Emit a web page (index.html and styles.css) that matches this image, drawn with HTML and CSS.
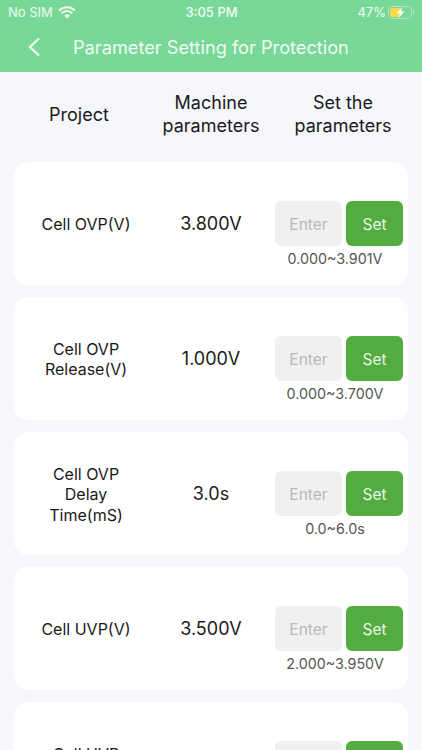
FILE: index.html
```html
<!DOCTYPE html>
<html lang="en">
<head>
<meta charset="utf-8">
<title>Parameter Setting for Protection</title>
<link rel="stylesheet" href="styles.css">
</head>
<body>
<div class="page">
  <header class="topbar">
    <div class="status">
      <div class="status-left">
        <span>No SIM</span>
        <svg class="wifi" viewBox="0 0 18 13" width="18" height="13"><path d="M9 12.600 6.300 9.700a3.800 3.800 0 0 1 5.400 0Z" fill="#f1faf3"/><path d="M1 4.600a11.400 11.400 0 0 1 16 0M3.600 7.300a7.700 7.700 0 0 1 10.800 0" fill="none" stroke="#f1faf3" stroke-width="2"/></svg>
      </div>
      <span class="status-time">3:05 PM</span>
      <div class="status-right">
        <span>47%</span>
        <svg class="battery" viewBox="0 0 27 13" width="27" height="13"><rect x=".5" y=".5" width="23" height="12" rx="3" fill="none" stroke="#b5dfc0"/><rect x="2" y="2" width="11" height="9" rx="1.500" fill="#f5d94e"/><path d="M25 4.500c1 .3 1.500 1 1.500 2s-.5 1.700-1.500 2Z" fill="#b5dfc0"/><path d="M14.500 1 8.500 7.500h3.500L10.500 12l6-6.500H13Z" fill="#fff"/></svg>
      </div>
    </div>
    <div class="nav">
      <svg class="back" viewBox="0 0 14 20" width="14" height="20"><path d="M12 1.500 3 10l9 8.500" fill="none" stroke="#f1faf3" stroke-width="2.200"/></svg>
      <h1 class="title">Parameter Setting for Protection</h1>
    </div>
  </header>

  <div class="heads">
    <div class="head head-project">Project</div>
    <div class="head">Machine<br>parameters</div>
    <div class="head">Set the<br>parameters</div>
  </div>

  <main class="list">
    <section class="card">
      <div class="label">Cell OVP(V)</div>
      <div class="value">3.800V</div>
      <div class="control">
        <div class="control-row"><div class="enter">Enter</div><div class="set">Set</div></div>
        <div class="range">0.000~3.901V</div>
      </div>
    </section>
    <section class="card">
      <div class="label">Cell OVP<br>Release(V)</div>
      <div class="value">1.000V</div>
      <div class="control">
        <div class="control-row"><div class="enter">Enter</div><div class="set">Set</div></div>
        <div class="range">0.000~3.700V</div>
      </div>
    </section>
    <section class="card">
      <div class="label">Cell OVP<br>Delay<br>Time(mS)</div>
      <div class="value">3.0s</div>
      <div class="control">
        <div class="control-row"><div class="enter">Enter</div><div class="set">Set</div></div>
        <div class="range">0.0~6.0s</div>
      </div>
    </section>
    <section class="card">
      <div class="label">Cell UVP(V)</div>
      <div class="value">3.500V</div>
      <div class="control">
        <div class="control-row"><div class="enter">Enter</div><div class="set">Set</div></div>
        <div class="range">2.000~3.950V</div>
      </div>
    </section>
    <section class="card">
      <div class="label">Cell UVP<br>Release(V)</div>
      <div class="value">3.600V</div>
      <div class="control">
        <div class="control-row"><div class="enter">Enter</div><div class="set">Set</div></div>
        <div class="range">0.000~3.700V</div>
      </div>
    </section>
  </main>
</div>
</body>
</html>
```
FILE: styles.css
```css
* { box-sizing: border-box; }
html, body { margin: 0; padding: 0; height: 750px; overflow: hidden; }
body { background: #f5f7fb; font-family: Inter, "Liberation Sans", sans-serif; color: #1a1a1a; }
.page { width: 422px; height: 750px; overflow: hidden; }

.topbar { height: 72px; background: #78d898; color: #f1faf3; }
.status { height: 24px; padding: 0 7px 0 8px; display: grid; grid-template-columns: 1fr auto 1fr; align-items: center; font-size: 13px; }
.status-left { display: flex; align-items: center; gap: 5px; }
.status-right { display: flex; align-items: center; justify-content: flex-end; gap: 2px; }
.status-time { font-weight: 500; }
.nav { height: 48px; display: flex; align-items: center; padding: 0 0 2px 27px; }
.back { flex: none; }
.title { margin: 0 0 0 32px; font-size: 18.200px; font-weight: 400; white-space: nowrap; }

.heads { height: 90px; padding: 0 14px 6px; display: grid; grid-template-columns: 130px 134px 130px; align-items: center; font-size: 18px; line-height: 23px; text-align: center; }

.list { display: flex; flex-direction: column; gap: 12px; padding: 0 14px; }
.card { flex: none; height: 123px; background: #fff; border-radius: 14px; display: grid; grid-template-columns: 144px 106px 1fr; padding-top: 39px; align-items: start; }
.label { height: 46.500px; display: flex; align-items: center; justify-content: center; text-align: center; font-size: 16px; line-height: 20.500px; }
.value { height: 45px; display: flex; align-items: center; justify-content: center; font-size: 18px; }
.control { padding-left: 11px; display: flex; flex-direction: column; align-items: stretch; width: 139px; }
.control-row { display: flex; gap: 4px; }
.enter { width: 67px; height: 45px; padding-top: 1px; border-radius: 6px; background: #f0f0f0; color: #b9b9b9; font-size: 15.500px; display: flex; align-items: center; justify-content: center; }
.set { width: 57px; height: 45px; padding-top: 1px; border-radius: 6px; background: #53ac3f; color: #e8f5e4; font-size: 15.500px; display: flex; align-items: center; justify-content: center; }
.range { margin-top: 4px; padding-right: 8px; font-size: 14.300px; line-height: 18px; text-align: center; color: #555; white-space: nowrap; }
```
